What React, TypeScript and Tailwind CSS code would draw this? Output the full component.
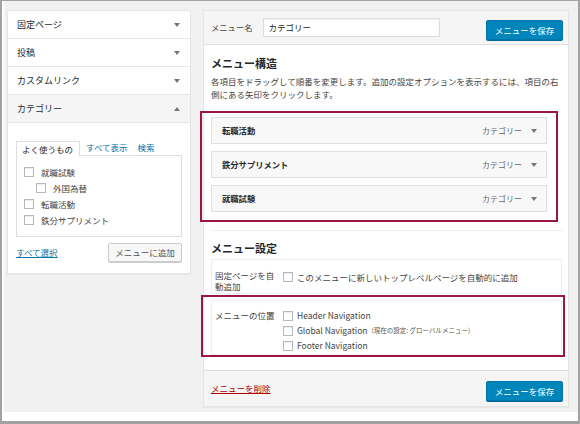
import React from 'react';

const Arrow = ({ up = false }: { up?: boolean }) => (
  <svg width="6" height="4" viewBox="0 0 6 4" className="shrink-0">
    {up ? <path d="M0 4 L3 0 L6 4 Z" fill="#72777c" /> : <path d="M0 0 L6 0 L3 4 Z" fill="#72777c" />}
  </svg>
);

const Check = () => (
  <span className="inline-block w-[10px] h-[10px] border border-[#b4b9be] bg-white shrink-0 shadow-[inset_0_1px_1px_rgba(0,0,0,0.08)]" />
);

const sections = ['固定ページ', '投稿', 'カスタムリンク'];

const categories = [
  { label: '就職試験', indent: false },
  { label: '外国為替', indent: true },
  { label: '転職活動', indent: false },
  { label: '鉄分サプリメント', indent: false },
];

const menuItems = ['転職活動', '鉄分サプリメント', '就職試験'];

const locations = ['Header Navigation', 'Global Navigation', 'Footer Navigation'];

function SaveButton() {
  return (
    <button className="w-[77px] h-[20px] bg-[#0085ba] border border-[#0073aa] rounded-[2px] text-white text-[8.5px] leading-none shadow-[0_1px_0_#006799]">
      メニューを保存
    </button>
  );
}

export default function App() {
  return (
    <div className="w-[580px] h-[424px] bg-white border-l-2 border-r-2 border-t border-b-[3px] border-[#a2a2a2] font-['Noto_Sans_CJK_JP','Liberation_Sans',sans-serif] text-[#23282d] overflow-hidden">
      <div className="h-[411px] ml-[2px] bg-[#f1f1f1] flex items-start gap-[12px] pl-[3px] pt-[9px]">
        {/* Left: add menu items */}
        <div className="w-[184px] bg-white border border-[#e5e5e5] shadow-[0_1px_1px_rgba(0,0,0,0.04)]">
          {sections.map((s) => (
            <div key={s} className="h-[28px] border-b border-[#e5e5e5] flex items-center justify-between pl-[9px] pr-[10px]">
              <span className="text-[9px] leading-none">{s}</span>
              <Arrow />
            </div>
          ))}
          <div className="h-[28px] border-b border-[#e5e5e5] bg-[#f5f5f5] flex items-center justify-between pl-[9px] pr-[10px]">
            <span className="text-[9px] leading-none">カテゴリー</span>
            <Arrow up />
          </div>
          <div className="px-[8px] pt-[18px] pb-[11px]">
            <div className="flex items-end text-[8.5px] leading-none">
              <div className="w-[64px] h-[15px] border border-b-0 border-[#dddddd] bg-white flex items-center pl-[5px] -mb-px relative z-10">
                よく使うもの
              </div>
              <span className="text-[#0073aa] ml-[6px] mb-[4px]">すべて表示</span>
              <span className="text-[#0073aa] ml-[10px] mb-[4px]">検索</span>
            </div>
            <div className="border border-[#dddddd] pl-[7px] pt-[8px] pb-[8px]">
              {categories.map((c) => (
                <div key={c.label} className={`h-[16px] flex items-center gap-[7px] text-[8.5px] text-[#444] ${c.indent ? 'pl-[12px]' : ''}`}>
                  <Check />
                  <span className="leading-none">{c.label}</span>
                </div>
              ))}
            </div>
            <div className="flex items-center justify-between mt-[6px]">
              <span className="text-[8.5px] leading-none text-[#0073aa] underline">すべて選択</span>
              <button className="w-[74px] h-[19px] bg-[#f7f7f7] border border-[#cccccc] rounded-[2px] text-[8.5px] leading-none text-[#555] shadow-[0_1px_0_#cccccc]">
                メニューに追加
              </button>
            </div>
          </div>
        </div>

        {/* Right: menu structure */}
        <div className="w-[366px] bg-white border border-[#e5e5e5] shadow-[0_1px_1px_rgba(0,0,0,0.04)]">
          <div className="h-[34px] bg-[#f5f5f5] border-b border-[#dfdfdf] flex items-center pl-[7px] pr-[5px]">
            <span className="text-[8.3px] leading-none text-[#444]">メニュー名</span>
            <div className="ml-[10px] w-[177px] h-[19px] bg-white border border-[#dddddd] flex items-center pl-[5px] text-[8.5px] leading-none shadow-[inset_0_1px_2px_rgba(0,0,0,0.07)]">
              カテゴリー
            </div>
            <div className="ml-auto">
              <SaveButton />
            </div>
          </div>

          <div className="pl-[7px] pr-[6px] pt-[10px] pb-[13px]">
            <h3 className="text-[11px] leading-[16px] font-bold">メニュー構造</h3>
            <p className="mt-[4px] text-[8.5px] leading-[13px] text-[#444]">
              各項目をドラッグして順番を変更します。追加の設定オプションを表示するには、項目の右側にある矢印をクリックします。
            </p>

            <div className="mt-[10px] -ml-[11px] w-[358px] border-2 border-[#9b1645] pl-[9px] pt-[4px] pb-[8px] flex flex-col gap-[7px]">
              {menuItems.map((m) => (
                <div key={m} className="w-[336px] h-[27px] bg-[#f8f8f8] border border-[#dfdfdf] flex items-center pl-[10px] pr-[9px]">
                  <span className="text-[8.3px] leading-none font-bold">{m}</span>
                  <span className="ml-auto text-[8px] leading-none text-[#666]">カテゴリー</span>
                  <span className="ml-[9px]">
                    <Arrow />
                  </span>
                </div>
              ))}
            </div>

            <div className="mt-[8px] border-t border-[#eeeeee] pt-[9px]">
              <h3 className="text-[11px] leading-[16px] font-bold">メニュー設定</h3>
              <div className="mt-[3px] border border-[#eeeeee] flex pl-[3px] pt-[10px] pb-[2px]">
                <div className="w-[68px] shrink-0 pr-[7px] text-[8.5px] leading-[10.5px] text-[#444]">固定ページを自動追加</div>
                <div className="flex items-start gap-[4px] pt-[2px]">
                  <Check />
                  <span className="text-[8.5px] leading-[10px] text-[#444]">このメニューに新しいトップレベルページを自動的に追加</span>
                </div>
              </div>
              <div className="mt-px -ml-[10px] -mr-[3px] border-2 border-[#9b1645] pl-[8px] pr-px pt-[3px]">
                <div className="border border-[#eeeeee] flex pl-[3px] pt-[7px] pb-[1px]">
                  <div className="w-[68px] shrink-0 h-[15px] flex items-center text-[8.5px] leading-none text-[#444]">メニューの位置</div>
                  <div className="flex flex-col">
                    {locations.map((l, i) => (
                      <div key={l} className="h-[15px] flex items-center gap-[4px]">
                        <Check />
                        <span className="text-[8.5px] leading-none text-[#444]">{l}</span>
                        {i === 1 && <span className="text-[6.5px] leading-none text-[#555]">(現在の設定: グローバルメニュー)</span>}
                      </div>
                    ))}
                  </div>
                </div>
              </div>
            </div>
          </div>

          <div className="h-[36px] bg-[#f5f5f5] border-t border-[#dfdfdf] flex items-center pl-[7px] pr-[5px]">
            <span className="text-[8.5px] leading-none text-[#a00] underline">メニューを削除</span>
            <div className="ml-auto">
              <SaveButton />
            </div>
          </div>
        </div>
      </div>
    </div>
  );
}
